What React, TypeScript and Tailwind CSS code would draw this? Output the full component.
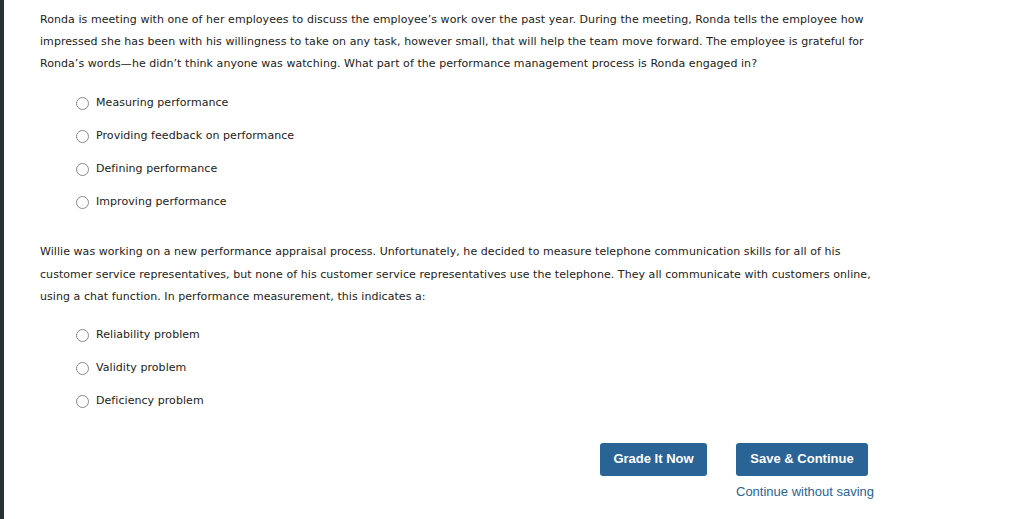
import React from 'react';

const q1Options = [
  'Measuring performance',
  'Providing feedback on performance',
  'Defining performance',
  'Improving performance',
];

const q2Options = ['Reliability problem', 'Validity problem', 'Deficiency problem'];

const Option = ({ label }: { label: string }) => (
  <div className="flex items-center h-[33px] pl-[36px]">
    <span className="w-[13px] h-[13px] rounded-full border border-[#8a8a8a] bg-white mr-[7px] shrink-0"></span>
    <span>{label}</span>
  </div>
);

export default function App() {
  return (
    <div className="flex min-h-[519px] bg-white text-[#222] font-['DejaVu_Sans',Verdana,sans-serif] text-[11px] tracking-[0.06px]">
      {/* left strip */}
      <div className="w-[4px] bg-[#263035] shrink-0"></div>

      <div className="flex-1 pl-[36px] pt-[9px]">
        {/* Question 1 */}
        <p className="leading-[22px] w-[850px]">
          Ronda is meeting with one of her employees to discuss the employee’s work over the past year. During the meeting, Ronda tells the employee how impressed she has been with his willingness to take on any task, however small, that will help the team move forward. The employee is grateful for Ronda’s words—he didn’t think anyone was watching. What part of the performance management process is Ronda engaged in?
        </p>
        <div className="mt-[12px]">
          {q1Options.map((o) => (
            <Option key={o} label={o} />
          ))}
        </div>

        {/* Question 2 */}
        <p className="leading-[22.5px] w-[850px] mt-[22px]">
          Willie was working on a new performance appraisal process. Unfortunately, he decided to measure telephone communication skills for all of his customer service representatives, but none of his customer service representatives use the telephone. They all communicate with customers online, using a chat function. In performance measurement, this indicates a:
        </p>
        <div className="mt-[10px]">
          {q2Options.map((o) => (
            <Option key={o} label={o} />
          ))}
        </div>

        {/* Actions */}
        <div className="flex gap-[29px] ml-[560px] mt-[25px] font-['Liberation_Sans',Arial,sans-serif] tracking-normal">
          <button className="w-[107px] h-[33px] rounded-[3px] bg-[#2a6496] text-white font-bold text-[13px]">
            Grade It Now
          </button>
          <div className="flex flex-col">
            <button className="w-[132px] h-[33px] rounded-[3px] bg-[#2a6496] text-white font-bold text-[13px]">
              Save &amp; Continue
            </button>
            <a className="mt-[6px] text-[13px] text-[#2a6496] whitespace-nowrap">Continue without saving</a>
          </div>
        </div>
      </div>
    </div>
  );
}
